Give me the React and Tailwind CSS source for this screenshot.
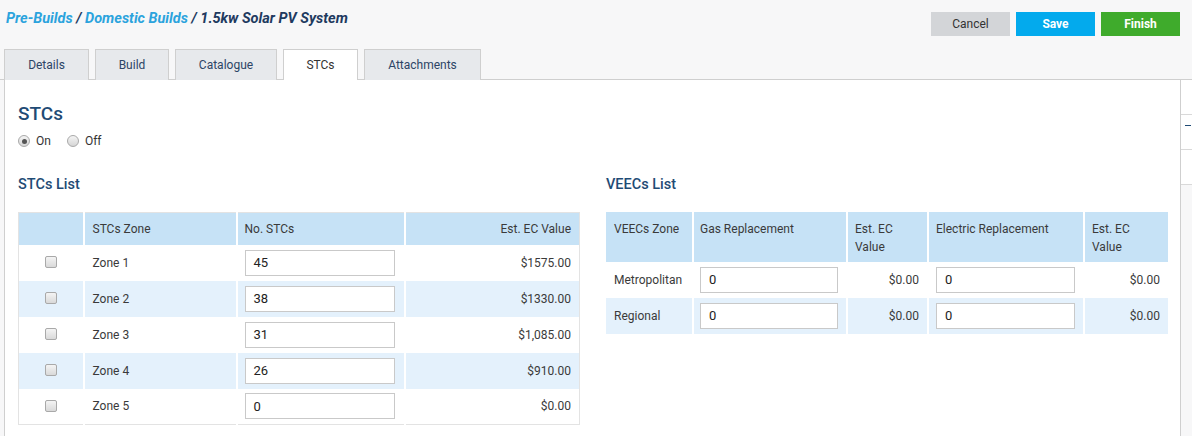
import React from 'react'

const stcRows = [
  { zone: 'Zone 1', no: '45', value: '$1575.00' },
  { zone: 'Zone 2', no: '38', value: '$1330.00' },
  { zone: 'Zone 3', no: '31', value: '$1,085.00' },
  { zone: 'Zone 4', no: '26', value: '$910.00' },
  { zone: 'Zone 5', no: '0', value: '$0.00' },
]

const veecRows = [
  { zone: 'Metropolitan', gas: '0', gasValue: '$0.00', elec: '0', elecValue: '$0.00' },
  { zone: 'Regional', gas: '0', gasValue: '$0.00', elec: '0', elecValue: '$0.00' },
]

const tabs = [
  { label: 'Details', w: 'w-[85px]' },
  { label: 'Build', w: 'w-[74px]' },
  { label: 'Catalogue', w: 'w-[102px]' },
  { label: 'STCs', w: 'w-[75px]', active: true },
  { label: 'Attachments', w: 'w-[117px]' },
]

function Checkbox() {
  return (
    <span className="inline-block w-[12px] h-[12px] rounded-[2px] border border-[#a9a9a9] bg-gradient-to-b from-[#f4f4f4] to-[#d9d9d9]" />
  )
}

function Radio({ checked }) {
  return (
    <span className="inline-flex items-center justify-center w-[12px] h-[12px] rounded-full border border-[#a9a9a9] bg-gradient-to-b from-[#f4f4f4] to-[#d6d6d6]">
      {checked && <span className="w-[5px] h-[5px] rounded-full bg-[#555]" />}
    </span>
  )
}

function Input({ value, w }) {
  return (
    <div className={`${w} h-[26px] border border-[#c9c9c9] bg-white px-[8px] flex items-center text-[13px] text-[#222]`}>
      {value}
    </div>
  )
}

function StcTable() {
  return (
    <table className="w-[561px] table-fixed border-collapse border border-[#e3e3e3] text-[12px] text-[#3a3a3a]">
      <colgroup>
        <col className="w-[65px]" />
        <col className="w-[153px]" />
        <col className="w-[168px]" />
        <col className="w-[175px]" />
      </colgroup>
      <thead>
        <tr className="h-[32px] bg-[#c6e2f6]">
          <th className="font-normal" />
          <th className="font-normal text-left pl-[8px] border-l-2 border-white">STCs Zone</th>
          <th className="font-normal text-left pl-[7px] border-l-2 border-white">No. STCs</th>
          <th className="font-normal text-right pr-[8px] border-l-2 border-white">Est. EC Value</th>
        </tr>
      </thead>
      <tbody>
        {stcRows.map((r, i) => (
          <tr key={r.zone} className={`h-[36px] ${i % 2 ? 'bg-[#e4f1fc]' : 'bg-white'}`}>
            <td className="text-center align-middle pt-[3px]"><Checkbox /></td>
            <td className="pl-[8px] border-l-2 border-white">{r.zone}</td>
            <td className="pl-[7px] border-l-2 border-white"><Input value={r.no} w="w-[150px]" /></td>
            <td className="text-right pr-[8px] border-l-2 border-white">{r.value}</td>
          </tr>
        ))}
      </tbody>
    </table>
  )
}

function VeecTable() {
  return (
    <table className="w-[562px] table-fixed border-collapse text-[12px] text-[#3a3a3a]">
      <colgroup>
        <col className="w-[87px]" />
        <col className="w-[154px]" />
        <col className="w-[81px]" />
        <col className="w-[156px]" />
        <col className="w-[84px]" />
      </colgroup>
      <thead>
        <tr className="bg-[#c6e2f6] leading-[18px]">
          <th className="font-normal text-left align-top px-[8px] pt-[8px] pb-[6px]">VEECs Zone</th>
          <th className="font-normal text-left align-top pl-[6px] pt-[8px] pb-[6px] border-l-2 border-white">Gas Replacement</th>
          <th className="font-normal text-left align-top pl-[7px] pt-[8px] pb-[6px] border-l-2 border-white">Est. EC<br />Value</th>
          <th className="font-normal text-left align-top pl-[7px] pt-[8px] pb-[6px] border-l-2 border-white">Electric Replacement</th>
          <th className="font-normal text-left align-top pl-[7px] pt-[8px] pb-[6px] border-l-2 border-white">Est. EC<br />Value</th>
        </tr>
      </thead>
      <tbody>
        {veecRows.map((r, i) => (
          <tr key={r.zone} className={`h-[36px] ${i % 2 ? 'bg-[#e4f1fc]' : 'bg-white'}`}>
            <td className="pl-[8px]">{r.zone}</td>
            <td className="pl-[6px] border-l-2 border-white"><Input value={r.gas} w="w-[138px]" /></td>
            <td className="text-right pr-[8px] border-l-2 border-white">{r.gasValue}</td>
            <td className="pl-[7px] border-l-2 border-white"><Input value={r.elec} w="w-[139px]" /></td>
            <td className="text-right pr-[8px] border-l-2 border-white">{r.elecValue}</td>
          </tr>
        ))}
      </tbody>
    </table>
  )
}

export default function App() {
  return (
    <div className="w-[1192px] h-[436px] overflow-hidden bg-[#f7f7f8] font-['Roboto',sans-serif] flex flex-col">
      {/* header */}
      <div className="flex justify-between items-start h-[49px] pl-[6px] pr-[12px]">
        <div className="pt-[8px] text-[14.5px] font-bold italic text-[#1e3a5f]">
          <span className="text-[#2ba3dd]">Pre-Builds</span> / <span className="text-[#2ba3dd]">Domestic Builds</span> / 1.5kw Solar PV System
        </div>
        <div className="flex gap-[6px] pt-[12px]">
          <button className="w-[79px] h-[24px] bg-[#d3d5d8] text-[12px] text-[#333]">Cancel</button>
          <button className="w-[79px] h-[24px] bg-[#03aaed] text-[12px] font-bold text-white">Save</button>
          <button className="w-[79px] h-[24px] bg-[#3fab2c] text-[12px] font-bold text-white">Finish</button>
        </div>
      </div>

      {/* tabs */}
      <div className="flex gap-[6px] pl-[4px] h-[31px] border-b border-[#cfcfcf]">
        {tabs.map((t) => (
          <div
            key={t.label}
            className={`${t.w} flex items-center justify-center text-[12px] border border-[#cfcfcf] ${
              t.active ? 'bg-white text-[#333] border-b-white -mb-px h-[32px]' : 'bg-[#e7e9ec] text-[#2d4566] border-b-0 h-[31px]'
            }`}
          >
            {t.label}
          </div>
        ))}
      </div>

      {/* body */}
      <div className="flex flex-1 min-h-0">
        <div className="ml-[4px] w-[1176px] shrink-0 bg-white border-l border-[#cfcfcf] pl-[13px] pr-[13px]">
          <h2 className="mt-[23px] text-[19px] leading-[22px] font-medium text-[#1f4b75]">STCs</h2>
          <div className="flex items-center gap-[6px] mt-[7px] text-[12px] text-[#333]">
            <Radio checked />
            <span className="mr-[10px]">On</span>
            <Radio />
            <span>Off</span>
          </div>
          <div className="flex gap-[26px] mt-[26px]">
            <div>
              <h3 className="text-[14.5px] font-medium text-[#1f4b75] leading-[18px] mb-[18px]">STCs List</h3>
              <StcTable />
            </div>
            <div>
              <h3 className="text-[14.5px] font-medium text-[#1f4b75] leading-[18px] mb-[18px]">VEECs List</h3>
              <VeecTable />
            </div>
          </div>
        </div>
        {/* clipped side panel */}
        <div className="flex-1 border-l border-[#cfcfcf] flex flex-col">
          <div className="h-[35px] bg-white border-b border-[#d9d9d9]" />
          <div className="h-[35px] bg-white border-b border-[#d9d9d9] relative">
            <span className="absolute left-[4px] top-[10px] w-[6px] h-px bg-[#1f4b75]" />
          </div>
          <div className="h-[35px] bg-white border-b border-[#d9d9d9]" />
          <div className="flex-1 bg-[#f7f7f8]" />
        </div>
      </div>
    </div>
  )
}
